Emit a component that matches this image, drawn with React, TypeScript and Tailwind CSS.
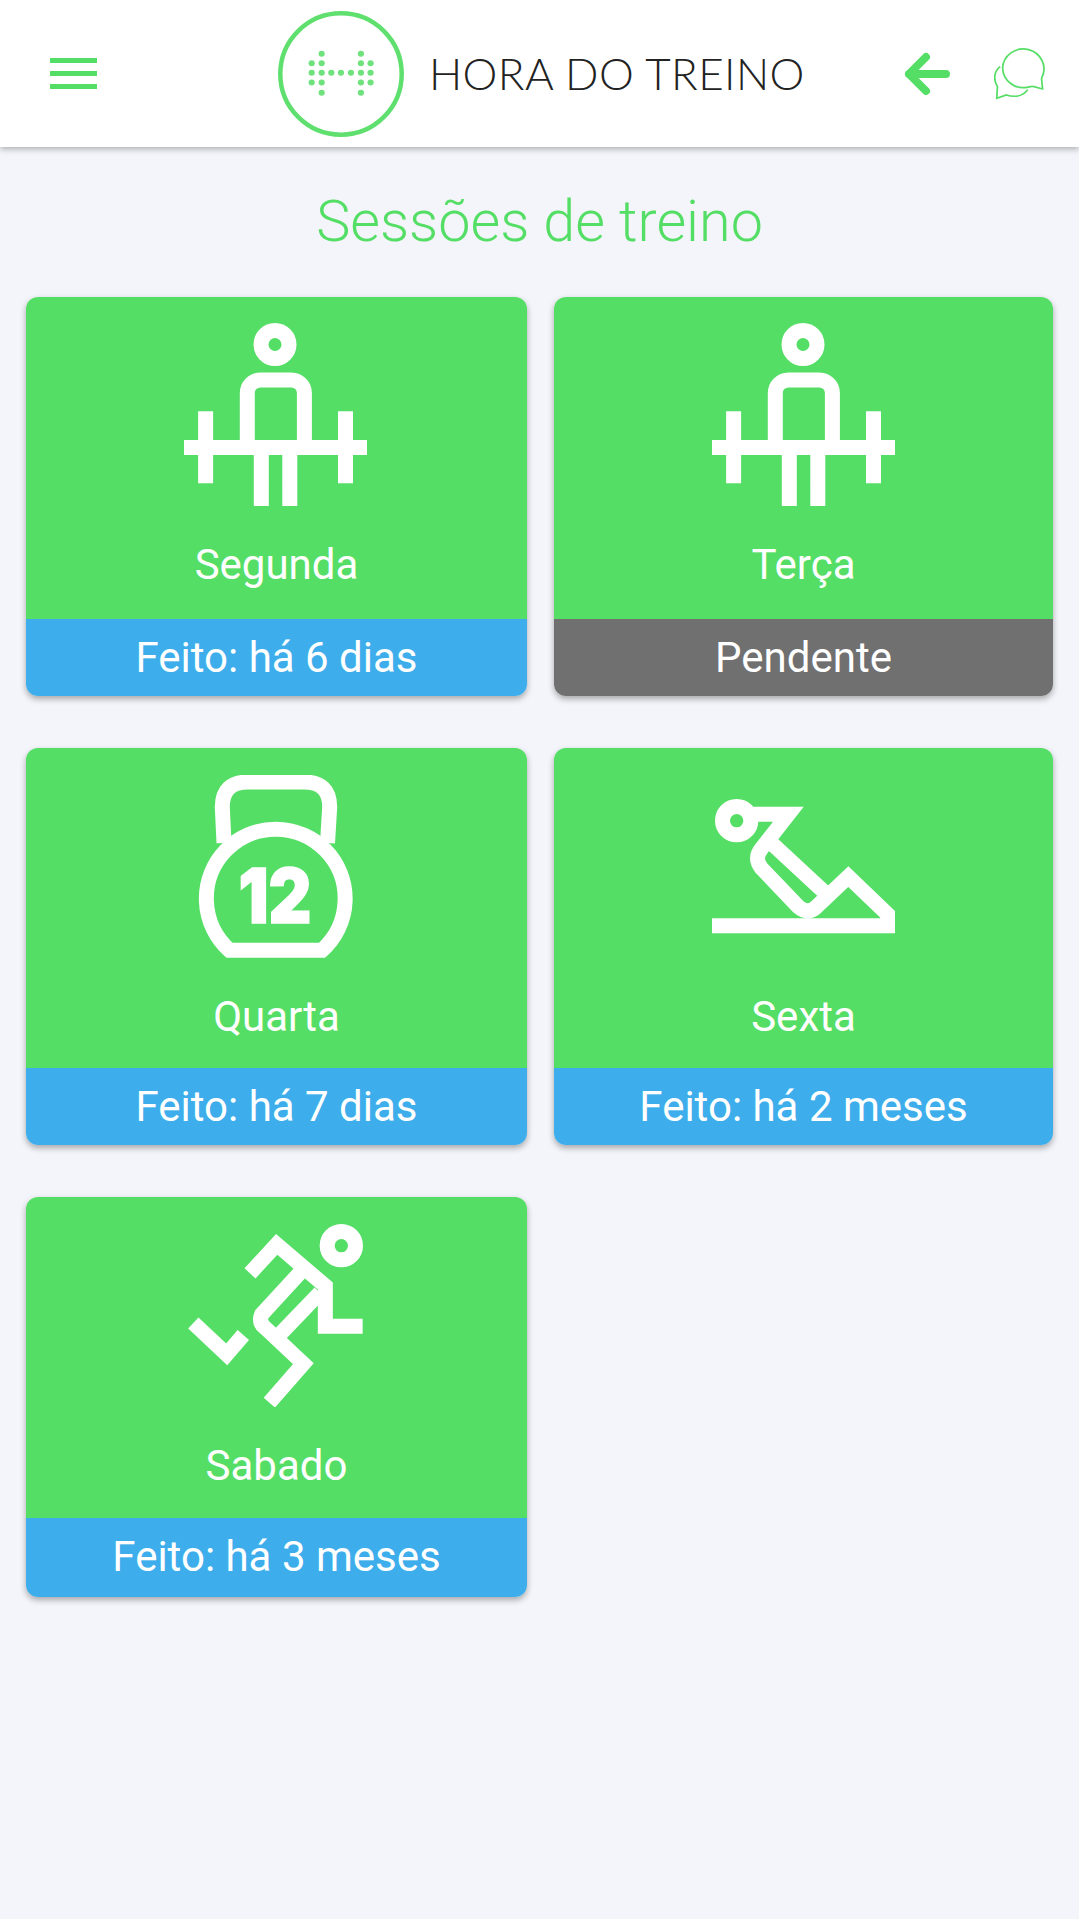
const strokeIcon = {
	fill: 'none',
	stroke: '#ffffff',
	strokeMiterlimit: 10,
}

const Barbell = () => (
	<svg className="w-[183px] h-[183px]" viewBox="0 0 183 183" {...strokeIcon} strokeWidth={15}>
		<circle cx="91" cy="21.5" r="14" />
		<path d="M0 124.4H183M21.6 88.3V160.3M161.5 88.3V160.3M77.3 124V183.3M105.8 124V183.3" />
		<path d="M63.3 124V70a13 13 0 0 1 13-13H107.400a13 13 0 0 1 13 13V124" />
	</svg>
)

const Kettlebell = () => (
	<svg className="w-[183px] h-[183px]" viewBox="0 0 183 183" {...strokeIcon} strokeWidth={15}>
		<path d="M40 68L38.3 32Q38.3 7 64 7H120Q145.7 7 145.7 32L143.500 68" />
		<path d="M45.500 175.300A69.400 69.400 0 1 1 138 175.300Z" />
		<text
			x="91"
			y="148.300"
			textAnchor="middle"
			textLength="73"
			lengthAdjust="spacingAndGlyphs"
			fontFamily="Inter, sans-serif"
			fontWeight="900"
			fontSize="75"
			fill="#ffffff"
			stroke="#ffffff"
			strokeWidth="1.500"
		>
			12
		</text>
	</svg>
)

const Situp = () => (
	<svg className="w-[183px] h-[183px]" viewBox="0 0 183 183" {...strokeIcon} strokeWidth={15}>
		<g transform="translate(-22 5) scale(0.3333)" strokeWidth={45}>
			<circle cx="140" cy="122" r="42.500" />
			<path d="M190 103H295L215 205Q190 235 215 265L325 380Q355 405 380 380L475 290L593 403V437H65" />
			<path d="M240 185L405 338" />
		</g>
	</svg>
)

const Runner = () => (
	<svg className="w-[183px] h-[183px]" viewBox="0 0 183 183" {...strokeIcon} strokeWidth={15}>
		<g transform="translate(-14 -13) scale(0.3333)" strokeWidth={45}>
			<circle cx="514" cy="104" r="42.500" />
			<path d="M240 187L320 100L466 225V346H578" />
			<path d="M390 185L275 310Q265 335 285 350L400 458L298 575" />
			<path d="M450 245L325 375" />
			<path d="M70 336L170 430L220 372" />
		</g>
	</svg>
)

const sessions = [
	{ name: 'Segunda', status: 'Feito: há 6 dias', icon: Barbell, done: true, height: 'h-[399px]', top: 'h-[322px] pt-[26px]', shift: 'pr-[2px]', foot: '' },
	{ name: 'Terça', status: 'Pendente', icon: Barbell, done: false, height: 'h-[399px]', top: 'h-[322px] pt-[26px]', shift: '', foot: '' },
	{ name: 'Quarta', status: 'Feito: há 7 dias', icon: Kettlebell, done: true, height: 'h-[397px]', top: 'h-[320px] pt-[27px]', shift: 'pr-[2px]', foot: '' },
	{ name: 'Sexta', status: 'Feito: há 2 meses', icon: Situp, done: true, height: 'h-[397px]', top: 'h-[320px] pt-[27px]', shift: '', foot: '' },
	{ name: 'Sabado', status: 'Feito: há 3 meses', icon: Runner, done: true, height: 'h-[400px]', top: 'h-[321px] pt-[27px]', shift: 'pr-[2px]', foot: 'pb-[3px]' },
]

const logoDots = [
	[934, 160], [1048, 160],
	[905, 188], [934, 188], [1048, 188], [1076, 188],
	[905, 217], [934, 217], [962, 217], [990, 217], [1019, 217], [1048, 217], [1076, 217],
	[905, 246], [934, 246], [1048, 246], [1076, 246],
	[934, 277], [1048, 277],
]

const Header = () => (
	<header className="relative z-10 flex items-center h-[147px] pl-[50px] pr-[32px] bg-white shadow-[0_2px_6px_rgba(0,0,0,0.3)]">
		<div className="flex flex-col gap-[8px] w-[47px]">
			<span className="h-[5px] bg-[#55de65]" />
			<span className="h-[5px] bg-[#55de65]" />
			<span className="h-[5px] bg-[#55de65]" />
		</div>
		<svg className="ml-[181px] w-[126px] h-[126px]" viewBox="0 0 126 126" fill="none">
			<circle cx="63" cy="63" r="60.700" stroke="#5fe06e" strokeWidth="4.500" />
			<g transform="translate(-278 -10.500) scale(0.3444 0.3333)" fill="#6fe27d">
				{logoDots.map(([x, y]) => (
					<circle key={`${x}-${y}`} cx={x} cy={y} r="9" />
				))}
			</g>
		</svg>
		<span className="ml-[25px] -mt-[2px] font-['Lato',sans-serif] font-light text-[44px] leading-none tracking-[0.4px] text-[#222222] whitespace-nowrap">
			HORA DO TREINO
		</span>
		<svg className="ml-auto w-[46px] h-[46px]" viewBox="0 0 46 46" fill="none" stroke="#55de65" strokeWidth="8" strokeLinecap="round" strokeLinejoin="round">
			<path d="M42 23H5M22 6L5 23L22 40" />
		</svg>
		<svg className="ml-[44px] w-[53px] h-[53px]" viewBox="0 0 53 53" fill="none" stroke="#55de65" strokeWidth="1.500">
			<g transform="translate(-454.600 -47) scale(0.3444 0.3333)">
				<path d="M1345 205a60 60 0 1 1 113 30l3 32l-25-7c-8-3-14 2-20 2a60 60 0 0 1-71-57z" strokeWidth="5" />
				<path d="M1338 200c-16 12-22 36-8 60l-2 35l28-10c22 8 46 4 62-16" strokeWidth="5" />
			</g>
		</svg>
	</header>
)

const SessionCard = ({ session }: { session: (typeof sessions)[number] }) => {
	const Icon = session.icon
	return (
		<div className={`flex flex-col ${session.height} rounded-[12px] overflow-hidden shadow-[0_3px_6px_rgba(0,0,0,0.32)] font-['Roboto',sans-serif] text-white`}>
			<div className={`flex flex-col items-center ${session.top} bg-[#55de65]`}>
				<div className={session.shift}>
					<Icon />
				</div>
				<p className="mt-[35px] text-[42px] leading-[47px]">{session.name}</p>
			</div>
			<div className={`flex flex-1 items-center justify-center text-[42px] ${session.foot} ${session.done ? 'bg-[#3daeeb]' : 'bg-[#707070]'}`}>
				{session.status}
			</div>
		</div>
	)
}

const App = () => {
	return (
		<div className="min-h-[1919px] bg-[#f4f5fa]">
			<Header />
			<main className="pl-[26px]">
				<h1 className="flex items-center justify-center h-[150px] pr-[26px] font-['Roboto',sans-serif] font-light text-[57.5px] text-[#55de65]">
					Sessões de treino
				</h1>
				<div className="grid grid-cols-[501px_499px] gap-x-[27px] gap-y-[52px]">
					{sessions.map((session) => (
						<SessionCard key={session.name} session={session} />
					))}
				</div>
			</main>
		</div>
	)
}

export default App
